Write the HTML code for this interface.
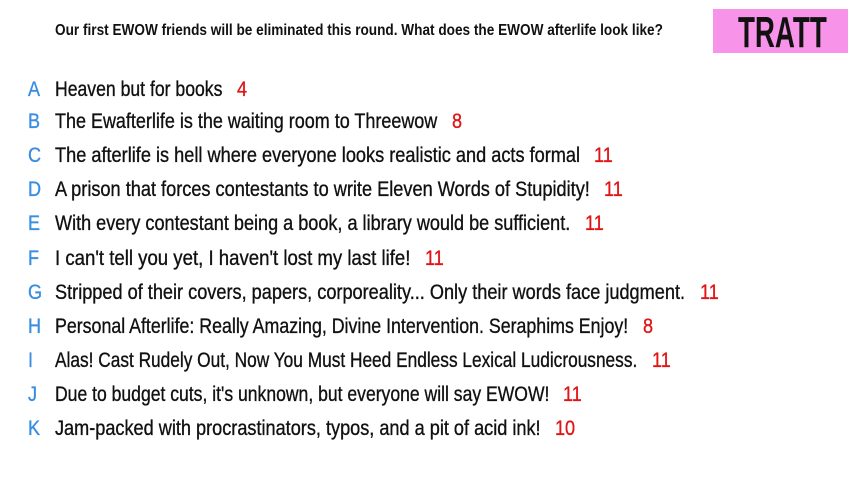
<!DOCTYPE html>
<html><head><meta charset="utf-8"><style>
body{margin:0;width:853px;height:480px;background:#fff;position:relative;overflow:hidden;font-family:"Liberation Sans",sans-serif;}
.q{position:absolute;left:55px;top:22px;font-size:15.5px;font-weight:bold;color:#111;white-space:nowrap;transform:scaleX(0.878);transform-origin:left top}
.box{position:absolute;left:713px;top:9px;width:135px;height:44px;background:#f793e8;}
.box span{position:absolute;left:0;right:0;top:-1px;text-align:center;font-size:44px;font-weight:bold;color:#111;transform:scaleX(0.63);}
.r{position:absolute;font-size:21.5px;white-space:nowrap;line-height:24px;color:#111;-webkit-text-stroke:0.35px currentColor}
.l{position:absolute;left:28px;color:#3a8ee0;transform:scaleX(0.84);transform-origin:left top}
.t{position:absolute;left:55px;transform:scaleX(0.843);transform-origin:left top}
.n{position:absolute;color:#e01515;transform:scaleX(0.84);transform-origin:left top}
</style></head><body>
<div class="q">Our first EWOW friends will be eliminated this round. What does the EWOW afterlife look like?</div>
<div class="box"><span>TRATT</span></div>
<div class="r" style="top:77px;left:0"><span class="l">A</span><span class="t" style="transform:scaleX(0.819)">Heaven but for books</span><span class="n" style="left:237px">4</span></div>
<div class="r" style="top:109px;left:0"><span class="l">B</span><span class="t" style="transform:scaleX(0.836)">The Ewafterlife is the waiting room to Threewow</span><span class="n" style="left:452px">8</span></div>
<div class="r" style="top:143px;left:0"><span class="l">C</span><span class="t" style="transform:scaleX(0.845)">The afterlife is hell where everyone looks realistic and acts formal</span><span class="n" style="left:594px">11</span></div>
<div class="r" style="top:177px;left:0"><span class="l">D</span><span class="t" style="transform:scaleX(0.845)">A prison that forces contestants to write Eleven Words of Stupidity!</span><span class="n" style="left:604px">11</span></div>
<div class="r" style="top:211px;left:0"><span class="l">E</span><span class="t" style="transform:scaleX(0.841)">With every contestant being a book, a library would be sufficient.</span><span class="n" style="left:585px">11</span></div>
<div class="r" style="top:246px;left:0"><span class="l">F</span><span class="t" style="transform:scaleX(0.865)">I can't tell you yet, I haven't lost my last life!</span><span class="n" style="left:425px">11</span></div>
<div class="r" style="top:280px;left:0"><span class="l">G</span><span class="t" style="transform:scaleX(0.844)">Stripped of their covers, papers, corporeality... Only their words face judgment.</span><span class="n" style="left:700px">11</span></div>
<div class="r" style="top:314px;left:0"><span class="l">H</span><span class="t" style="transform:scaleX(0.827)">Personal Afterlife: Really Amazing, Divine Intervention. Seraphims Enjoy!</span><span class="n" style="left:643px">8</span></div>
<div class="r" style="top:348px;left:0"><span class="l">I</span><span class="t" style="transform:scaleX(0.804)">Alas! Cast Rudely Out, Now You Must Heed Endless Lexical Ludicrousness.</span><span class="n" style="left:652px">11</span></div>
<div class="r" style="top:382px;left:0"><span class="l">J</span><span class="t" style="transform:scaleX(0.817)">Due to budget cuts, it's unknown, but everyone will say EWOW!</span><span class="n" style="left:563px">11</span></div>
<div class="r" style="top:416px;left:0"><span class="l">K</span><span class="t" style="transform:scaleX(0.843)">Jam-packed with procrastinators, typos, and a pit of acid ink!</span><span class="n" style="left:555px">10</span></div>
</body></html>
